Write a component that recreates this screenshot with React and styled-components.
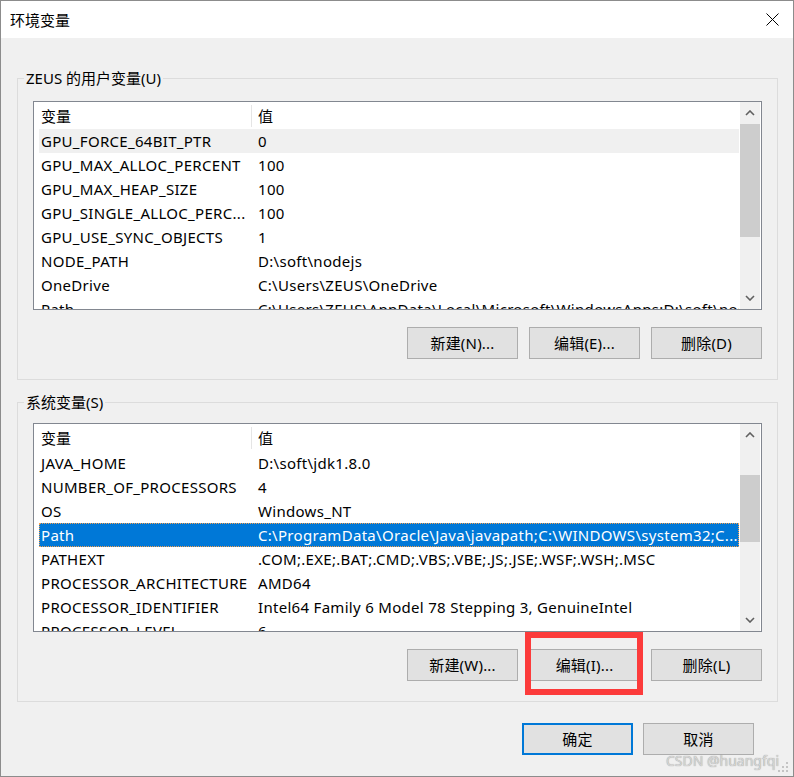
import React from "react";
import styled, { createGlobalStyle } from "styled-components";

const GlobalStyle = createGlobalStyle`
  html, body {
    margin: 0;
    padding: 0;
    background: #f0f0f0;
  }
  body {
    font-family: "Noto Sans", "Noto Sans CJK SC", sans-serif;
    font-size: 15px;
    color: #000;
  }
`;

const userVars = [
  ["GPU_FORCE_64BIT_PTR", "0"],
  ["GPU_MAX_ALLOC_PERCENT", "100"],
  ["GPU_MAX_HEAP_SIZE", "100"],
  ["GPU_SINGLE_ALLOC_PERC...", "100"],
  ["GPU_USE_SYNC_OBJECTS", "1"],
  ["NODE_PATH", "D:\\soft\\nodejs"],
  ["OneDrive", "C:\\Users\\ZEUS\\OneDrive"],
  ["Path", "C:\\Users\\ZEUS\\AppData\\Local\\Microsoft\\WindowsApps;D:\\soft\\nodejs;"],
];

const systemVars = [
  ["JAVA_HOME", "D:\\soft\\jdk1.8.0"],
  ["NUMBER_OF_PROCESSORS", "4"],
  ["OS", "Windows_NT"],
  ["Path", "C:\\ProgramData\\Oracle\\Java\\javapath;C:\\WINDOWS\\system32;C..."],
  ["PATHEXT", ".COM;.EXE;.BAT;.CMD;.VBS;.VBE;.JS;.JSE;.WSF;.WSH;.MSC"],
  ["PROCESSOR_ARCHITECTURE", "AMD64"],
  ["PROCESSOR_IDENTIFIER", "Intel64 Family 6 Model 78 Stepping 3, GenuineIntel"],
  ["PROCESSOR_LEVEL", "6"],
];

const Chevron = ({ down }) => (
  <svg width="10" height="6" viewBox="0 0 10 6">
    <polyline
      points={down ? "1,1 5,5 9,1" : "1,5 5,1 9,5"}
      fill="none"
      stroke="#606060"
      strokeWidth="1.6"
    />
  </svg>
);

const VarList = ({ rows, selected, muted, thumbOffset, thumbSize, top }) => (
  <ListBox $top={top}>
    <ListContent>
      <HeaderRow>
        <NameCell $header>变量</NameCell>
        <ValueCell>值</ValueCell>
      </HeaderRow>
      {rows.map(([name, value], i) => (
        <Row key={name} $selected={i === selected} $muted={i === muted}>
          <NameCell>{name}</NameCell>
          <ValueCell>{value}</ValueCell>
        </Row>
      ))}
    </ListContent>
    <Scrollbar>
      <ArrowButton>
        <Chevron />
      </ArrowButton>
      <Track>
        <Thumb $offset={thumbOffset} $size={thumbSize} />
      </Track>
      <ArrowButton>
        <Chevron down />
      </ArrowButton>
    </Scrollbar>
  </ListBox>
);

const App = () => {
  return (
    <>
      <GlobalStyle />
      <Window>
        <TitleBar>
          <Title>环境变量</Title>
          <CloseButton>
            <svg width="13" height="13" viewBox="0 0 13 13">
              <path d="M0.5 0.5 L12.5 12.5 M12.5 0.5 L0.5 12.5" stroke="#000" strokeWidth="1" />
            </svg>
          </CloseButton>
        </TitleBar>
        <Body>
          <Group>
            <Legend>ZEUS 的用户变量(U)</Legend>
            <VarList rows={userVars} muted={0} thumbOffset={0} thumbSize={113} top={13} />
            <ButtonRow>
              <Button>新建(N)...</Button>
              <Button>编辑(E)...</Button>
              <Button>删除(D)</Button>
            </ButtonRow>
          </Group>
          <Group $spaced>
            <Legend>系统变量(S)</Legend>
            <VarList rows={systemVars} selected={3} thumbOffset={29} thumbSize={67} top={11} />
            <ButtonRow>
              <Button>新建(W)...</Button>
              <Button>编辑(I)...</Button>
              <Button>删除(L)</Button>
            </ButtonRow>
          </Group>
          <Footer>
            <Button $primary>确定</Button>
            <Button>取消</Button>
          </Footer>
        </Body>
        <Highlight />
        <Watermark>CSDN @huangfqi</Watermark>
        <Grip>
          <svg width="12" height="12" viewBox="0 0 12 12" fill="#c4c4c4">
            <rect x="9" y="1" width="2" height="2" />
            <rect x="5" y="5" width="2" height="2" />
            <rect x="9" y="5" width="2" height="2" />
            <rect x="1" y="9" width="2" height="2" />
            <rect x="5" y="9" width="2" height="2" />
            <rect x="9" y="9" width="2" height="2" />
          </svg>
        </Grip>
      </Window>
    </>
  );
};

export default App;

const Window = styled.div`
  position: relative;
  width: 794px;
  height: 777px;
  box-sizing: border-box;
  border: 1px solid #8c8c8c;
  background: #f0f0f0;
  display: flex;
  flex-direction: column;
  overflow: hidden;
`;

const TitleBar = styled.div`
  height: 37px;
  flex-shrink: 0;
  background: #fff;
  display: flex;
  align-items: center;
  justify-content: space-between;
  padding-left: 9px;
`;

const Title = styled.span`
  font-size: 15px;
  line-height: 20px;
`;

const CloseButton = styled.div`
  width: 42px;
  height: 37px;
  display: flex;
  align-items: center;
  justify-content: center;
`;

const Body = styled.div`
  padding: 30px 15px 0 16px;
  display: flex;
  flex-direction: column;
`;

const Group = styled.fieldset`
  margin: ${(p) => (p.$spaced ? "12px" : "0")} 0 0 0;
  padding: 0 15px 20px 15px;
  border: 1px solid #dcdcdc;
  min-width: 0;
`;

const Legend = styled.legend`
  margin-left: -9px;
  padding: 0 2px;
  font-size: 15px;
  line-height: 20px;
`;

const ListBox = styled.div`
  margin-top: ${(p) => p.$top}px;
  height: 209px;
  box-sizing: border-box;
  border: 1px solid #828790;
  background: #fff;
  display: flex;
`;

const ListContent = styled.div`
  flex: 1;
  min-width: 0;
  overflow: hidden;
  padding-left: 5px;
  margin-right: 1px;
`;

const HeaderRow = styled.div`
  height: 27px;
  display: grid;
  grid-template-columns: 213px 1fr;
  align-items: center;
`;

const Row = styled.div`
  height: 24px;
  display: grid;
  grid-template-columns: 213px 1fr;
  align-items: center;
  box-sizing: border-box;
  letter-spacing: 0.3px;
  background: ${(p) => (p.$selected ? "#0078d7" : p.$muted ? "#f0f0f0" : "transparent")};
  color: ${(p) => (p.$selected ? "#fff" : "#000")};
  outline: ${(p) => (p.$selected ? "1px dotted #f5a04e" : "none")};
  outline-offset: -1px;
`;

const NameCell = styled.div`
  padding-left: 2px;
  white-space: nowrap;
  overflow: hidden;
  line-height: 22px;
  border-right: 1px solid ${(p) => (p.$header ? "#e5e5e5" : "transparent")};
`;

const ValueCell = styled.div`
  padding-left: 6px;
  white-space: nowrap;
  overflow: hidden;
  line-height: 22px;
`;

const Scrollbar = styled.div`
  width: 20px;
  flex-shrink: 0;
  margin-right: 1px;
  background: #f0f0f0;
  display: flex;
  flex-direction: column;
`;

const ArrowButton = styled.div`
  height: 22px;
  flex-shrink: 0;
  display: flex;
  align-items: center;
  justify-content: center;
`;

const Track = styled.div`
  flex: 1;
`;

const Thumb = styled.div`
  margin-top: ${(p) => p.$offset}px;
  height: ${(p) => p.$size}px;
  background: #cdcdcd;
`;

const ButtonRow = styled.div`
  margin-top: 17px;
  display: flex;
  justify-content: flex-end;
  gap: 11px;
`;

const Button = styled.button`
  width: 111px;
  height: 32px;
  box-sizing: border-box;
  padding: 0 0 1px;
  background: #e1e1e1;
  border: ${(p) => (p.$primary ? "2px solid #0078d7" : "1px solid #adadad")};
  font-family: inherit;
  font-size: 15px;
  letter-spacing: 0.2px;
  color: #000;
`;

const Footer = styled.div`
  margin-top: 21px;
  padding-right: 24px;
  display: flex;
  justify-content: flex-end;
  gap: 10px;
`;

const Highlight = styled.div`
  position: absolute;
  left: 524px;
  top: 631px;
  width: 118px;
  height: 63px;
  box-sizing: border-box;
  border: 6px solid #fc3b3b;
  pointer-events: none;
`;

const Watermark = styled.div`
  position: absolute;
  right: 14px;
  bottom: 6px;
  font-size: 14px;
  color: #d6d6d6;
  text-shadow: 0 0 1px #8a8a8a;
`;

const Grip = styled.div`
  position: absolute;
  right: 4px;
  bottom: 3px;
  display: flex;
`;
